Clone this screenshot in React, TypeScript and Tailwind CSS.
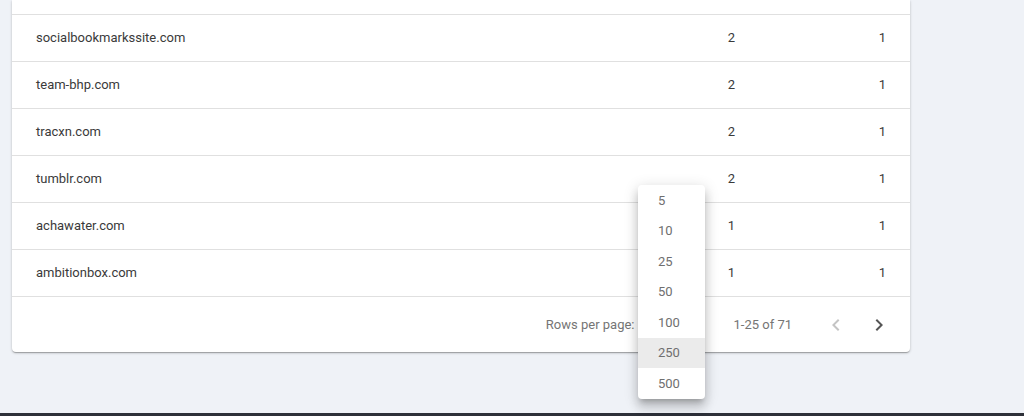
import React from "react";

const rows = [
  { domain: "socialbookmarkssite.com", links: 2, pages: 1 },
  { domain: "team-bhp.com", links: 2, pages: 1 },
  { domain: "tracxn.com", links: 2, pages: 1 },
  { domain: "tumblr.com", links: 2, pages: 1 },
  { domain: "achawater.com", links: 1, pages: 1 },
  { domain: "ambitionbox.com", links: 1, pages: 1 },
];

const pageSizes = [5, 10, 25, 50, 100, 250, 500];

function Arrow({ dir, className }: { dir: "left" | "right"; className?: string }) {
  return (
    <svg viewBox="0 0 24 24" width="24" height="24" className={className} fill="currentColor">
      {dir === "left" ? (
        <path d="M15.41 16.59 10.83 12l4.58-4.59L14 6l-6 6 6 6z" />
      ) : (
        <path d="M8.59 16.59 13.17 12 8.59 7.41 10 6l6 6-6 6z" />
      )}
    </svg>
  );
}

export default function App() {
  return (
    <div
      className="relative flex h-[416px] w-full flex-col overflow-hidden bg-[#eff2f7]"
      style={{ fontFamily: "Roboto, 'Liberation Sans', sans-serif" }}
    >
      <div className="flex-1 pl-3">
        <div className="w-[898px] rounded-b bg-white shadow-[0_1px_3px_rgba(0,0,0,0.2),0_1px_1px_rgba(0,0,0,0.14),0_2px_1px_-1px_rgba(0,0,0,0.12)]">
          <div className="h-[15px] border-b border-[#e0e0e0]" />
          {rows.map((r) => (
            <div
              key={r.domain}
              className="flex h-[47px] items-center border-b border-[#e0e0e0] text-[13px] text-[#3a3a3a]"
            >
              <div className="flex-1 pl-6">{r.domain}</div>
              <div className="w-[150px] pr-6 text-right">{r.links}</div>
              <div className="w-[151px] pr-6 text-right">{r.pages}</div>
            </div>
          ))}
          <div className="flex h-[55px] items-center justify-end pr-[11px] text-[13px] text-[#757575]">
            <span>Rows per page:</span>
            <div className="flex w-[67px] items-center pl-2 text-[#333]">25</div>
            <span className="ml-[32px]">1-25 of 71</span>
            <div className="ml-6 flex items-center gap-[3px]">
              <button className="flex h-10 w-10 items-center justify-center text-[#c4c4c4]">
                <Arrow dir="left" />
              </button>
              <button className="flex h-10 w-10 items-center justify-center text-[#555]">
                <Arrow dir="right" />
              </button>
            </div>
          </div>
        </div>
      </div>
      <div className="h-[3px] bg-[#2d3039]" />

      <ul className="absolute left-[638px] top-[185px] w-[67px] rounded bg-white shadow-[0_5px_5px_-3px_rgba(0,0,0,0.2),0_8px_10px_1px_rgba(0,0,0,0.14),0_3px_14px_2px_rgba(0,0,0,0.12)]">
        {pageSizes.map((n) => (
          <li
            key={n}
            className={
              n === 250
                ? "flex h-[30.5px] items-center bg-[#ebebeb] pl-5 text-[13px] text-[#6f6f6f]"
                : "flex h-[30.5px] items-center pl-5 text-[13px] text-[#6f6f6f]"
            }
          >
            {n}
          </li>
        ))}
      </ul>
    </div>
  );
}
